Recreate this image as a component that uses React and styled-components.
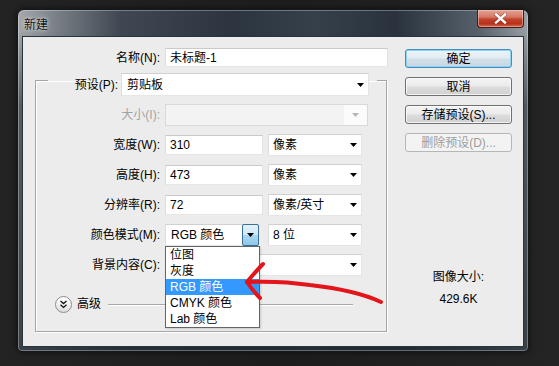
import React from "react";
import styled, { createGlobalStyle } from "styled-components";

const GlobalStyle = createGlobalStyle`
  html, body { margin: 0; padding: 0; }
  body {
    width: 559px;
    height: 366px;
    overflow: hidden;
    background: #1e1e1e;
    font-family: "Liberation Sans", "Noto Sans CJK SC", sans-serif;
    font-size: 12px;
    color: #000;
  }
  #root { width: 559px; height: 366px; }
`;

const Desktop = styled.div`
  position: relative;
  width: 559px;
  height: 366px;
  box-sizing: border-box;
  padding: 9px 0 0 17px;
  background: linear-gradient(90deg, #232323 0%, #1d1d1d 50%, #242424 100%);
`;

const Window = styled.div`
  width: 512px;
  height: 343px;
  box-sizing: border-box;
  display: flex;
  flex-direction: column;
  padding: 0 5px 5px;
  border: 1px solid #14181c;
  border-radius: 7px 7px 5px 5px;
  background:
    linear-gradient(180deg, rgba(0,0,0,0) 6%, rgba(24,30,36,0.55) 28%, rgba(32,40,48,0.8) 100%),
    linear-gradient(90deg, #a5a9ad 0%, #767d84 8%, #3f4852 20%, #2c353f 42%, #36404a 58%, #2a333d 74%, #56606a 90%, #98a0a7 100%);
  box-shadow: inset 0 0 0 1px rgba(255,255,255,0.3), 0 0 6px rgba(0,0,0,0.6);
`;

const TitleBar = styled.div`
  flex: none;
  height: 27px;
  margin: 0 -5px;
  padding: 0 4px 0 6px;
  display: flex;
  align-items: flex-start;
  justify-content: space-between;
`;

const Title = styled.span`
  margin-top: 6px;
  line-height: 15px;
  color: #101010;
  font-family: "Noto Sans CJK SC", sans-serif;
  text-shadow: 0 0 5px rgba(255,255,255,0.7), 0 0 2px rgba(255,255,255,0.6);
`;

const CloseButton = styled.div`
  width: 47px;
  height: 18px;
  box-sizing: border-box;
  display: flex;
  align-items: center;
  justify-content: center;
  border: 1px solid #4d1810;
  border-top: none;
  border-radius: 0 0 4px 4px;
  background: linear-gradient(180deg, #e3a294 0%, #d67a66 40%, #c2412b 55%, #b8311c 80%, #cf6a4f 100%);
  box-shadow: inset 0 0 0 1px rgba(255,220,210,0.45);
`;

const Client = styled.div`
  flex: 1;
  display: flex;
  background: #ececec;
  box-shadow: 0 0 0 1px #2b333b;
`;

const FormColumn = styled.div`
  position: relative;
  width: 370px;
  flex: none;
  padding-top: 11px;
  display: flex;
  flex-direction: column;
`;

const Row = styled.div`
  display: flex;
  align-items: center;
  gap: 5px;
  height: ${(p) => p.$h || 22}px;
  line-height: 16px;
`;

const Label = styled.span`
  width: ${(p) => p.$w}px;
  flex: none;
  text-align: right;
  white-space: nowrap;
  color: ${(p) => (p.$disabled ? "#a3a3a3" : "#000")};
`;

const TextBox = styled.div`
  width: ${(p) => p.$w}px;
  height: ${(p) => p.$h || 20}px;
  box-sizing: border-box;
  flex: none;
  display: flex;
  align-items: center;
  padding-left: 4px;
  background: #fff;
  border: 1px solid;
  border-color: #c9c9c9 #e2e2e2 #e6e6e6 #dddddd;
  white-space: nowrap;
`;

const SelectBox = styled.div`
  position: relative;
  width: ${(p) => p.$w}px;
  height: ${(p) => p.$h || 22}px;
  box-sizing: border-box;
  flex: none;
  margin-left: ${(p) => p.$ml || 0}px;
  display: flex;
  align-items: center;
  padding-left: ${(p) => p.$pl || 4}px;
  background: ${(p) => (p.$disabled ? "#f3f3f3" : "#fff")};
  border: 1px solid;
  border-color: ${(p) =>
    p.$disabled ? "#d9d9d9" : "#d0d0d0 #e4e4e4 #e6e6e6 #dedede"};
  white-space: nowrap;
`;

const SelectText = styled.span`
  flex: 1;
  overflow: hidden;
`;

const ArrowArea = styled.span`
  width: ${(p) => p.$w || 15}px;
  height: 100%;
  flex: none;
  display: flex;
  align-items: center;
  justify-content: center;
  box-sizing: border-box;
  background: ${(p) => (p.$plain ? "#fbfbfb" : "transparent")};
`;

const ArrowButton = styled.span`
  width: 17px;
  height: calc(100% + 2px);
  margin: -1px -1px -1px 0;
  flex: none;
  box-sizing: border-box;
  display: flex;
  align-items: center;
  justify-content: center;
  border: 1px solid #3c6f98;
  border-radius: 2px;
  background: linear-gradient(180deg, #e4f3fb 0%, #cde9f7 48%, #a9d7f1 52%, #8fc8ea 100%);
`;

const DropList = styled.div`
  position: absolute;
  left: -1px;
  top: calc(100% + 1px);
  width: 95px;
  box-sizing: border-box;
  border: 1px solid #646464;
  background: #fff;
  z-index: 5;
  box-shadow: 1px 1px 2px rgba(0,0,0,0.15);
`;

const DropItem = styled.div`
  height: 16px;
  line-height: 16px;
  padding-left: 4px;
  white-space: nowrap;
  background: ${(p) => (p.$active ? "#3399ff" : "transparent")};
  color: ${(p) => (p.$active ? "#fff" : "#000")};
`;

const GroupBox = styled.fieldset`
  margin: -3px 0 0 12px;
  width: 352px;
  box-sizing: border-box;
  padding: 8px 0 18px 0;
  border: 1px solid #a5a5a5;
  box-shadow: inset 1px 1px 0 #fff, 1px 1px 0 #fff;
  display: flex;
  flex-direction: column;
  gap: 8px;
  min-width: 0;
`;

const Legend = styled.legend`
  margin-left: 12px;
  padding: 9px 8px 0 0;
  display: flex;
  align-items: center;
  gap: 3px;
  line-height: 16px;
`;

const AdvancedRow = styled.div`
  display: flex;
  align-items: center;
  height: 18px;
  margin-top: 11px;
  padding-left: 19px;
  gap: 5px;
  line-height: 16px;
`;

const RoundButton = styled.span`
  width: 17px;
  height: 17px;
  box-sizing: border-box;
  flex: none;
  border-radius: 50%;
  border: 1px solid #8c8c8c;
  background: linear-gradient(180deg, #ffffff 0%, #f1f1f1 50%, #dcdcdc 100%);
  display: flex;
  align-items: center;
  justify-content: center;
`;

const Separator = styled.span`
  width: 245px;
  height: 1px;
  margin-left: 2px;
  background: #a8a8a8;
  box-shadow: 0 1px 0 #fff;
`;

const SideColumn = styled.div`
  width: 107px;
  flex: none;
  margin-left: 12px;
  padding-top: 12px;
  display: flex;
  flex-direction: column;
  align-items: center;
  gap: 9px;
`;

const Button = styled.div`
  width: 107px;
  height: 19px;
  box-sizing: border-box;
  display: flex;
  align-items: center;
  justify-content: center;
  border-radius: 3px;
  line-height: 16px;
  border: 1px solid ${(p) => (p.$primary ? "#3d8fc4" : p.$disabled ? "#b3b7ba" : "#707070")};
  color: ${(p) => (p.$disabled ? "#9d9d9d" : "#000")};
  background: ${(p) =>
    p.$disabled
      ? "#f3f3f3"
      : p.$primary
      ? "linear-gradient(180deg, #eef5f9 0%, #e1ebf1 48%, #d2dfe8 52%, #c7d7e2 100%)"
      : "linear-gradient(180deg, #f4f4f4 0%, #ebebeb 48%, #dddddd 52%, #d0d0d0 100%)"};
  box-shadow: ${(p) =>
    p.$primary
      ? "inset 0 0 0 1px #8fd3f2"
      : p.$disabled
      ? "none"
      : "inset 0 0 0 1px rgba(255,255,255,0.75)"};
`;

const SizeInfo = styled.div`
  margin-top: ${(p) => p.$mt}px;
  line-height: 16px;
  text-align: center;
  white-space: nowrap;
`;

const Overlay = styled.svg`
  position: absolute;
  left: 0;
  top: 0;
  width: 559px;
  height: 366px;
  pointer-events: none;
  z-index: 10;
`;

const Triangle = ({ color = "#000" }) => (
  <svg width="7" height="4" viewBox="0 0 7 4">
    <polygon points="0,0 7,0 3.5,4" fill={color} />
  </svg>
);

const Select = ({ w, h, ml, pl, text, disabled, arrowW }) => (
  <SelectBox $w={w} $h={h} $ml={ml} $pl={pl} $disabled={disabled}>
    <SelectText>{text}</SelectText>
    <ArrowArea $w={arrowW} $plain={disabled}>
      <Triangle color={disabled ? "#b5b5b5" : "#000"} />
    </ArrowArea>
  </SelectBox>
);

const modes = ["位图", "灰度", "RGB 颜色", "CMYK 颜色", "Lab 颜色"];

export default function App() {
  return (
    <>
      <GlobalStyle />
      <Desktop>
        <Window>
          <TitleBar>
            <Title>新建</Title>
            <CloseButton>
              <svg width="13" height="11" viewBox="0 0 13 11">
                <path
                  d="M2 1.5 L11 9.5 M11 1.5 L2 9.5"
                  stroke="#4a1209"
                  strokeWidth="3.6"
                  strokeLinecap="square"
                  opacity="0.45"
                />
                <path
                  d="M2 1.5 L11 9.5 M11 1.5 L2 9.5"
                  stroke="#fff"
                  strokeWidth="2.4"
                  strokeLinecap="square"
                />
              </svg>
            </CloseButton>
          </TitleBar>
          <Client>
            <FormColumn>
              <Row $h={19}>
                <Label $w={137}>名称(N):</Label>
                <TextBox $w={223} $h={19}>未标题-1</TextBox>
              </Row>
              <GroupBox>
                <Legend>
                  <Label $w={70}>预设(P):</Label>
                  <Select w={248} h={23} pl={5} text="剪贴板" />
                </Legend>
                <Row>
                  <Label $w={124} $disabled>大小(I):</Label>
                  <Select w={203} text="" disabled arrowW={23} />
                </Row>
                <Row>
                  <Label $w={124}>宽度(W):</Label>
                  <TextBox $w={98}>310</TextBox>
                  <Select w={94} text="像素" />
                </Row>
                <Row>
                  <Label $w={124}>高度(H):</Label>
                  <TextBox $w={98}>473</TextBox>
                  <Select w={94} text="像素" />
                </Row>
                <Row>
                  <Label $w={124}>分辨率(R):</Label>
                  <TextBox $w={98}>72</TextBox>
                  <Select w={94} text="像素/英寸" />
                </Row>
                <Row>
                  <Label $w={124}>颜色模式(M):</Label>
                  <SelectBox $w={94} $pl={5}>
                    <SelectText>RGB 颜色</SelectText>
                    <ArrowButton>
                      <Triangle />
                    </ArrowButton>
                    <DropList>
                      {modes.map((m) => (
                        <DropItem key={m} $active={m === "RGB 颜色"}>
                          {m}
                        </DropItem>
                      ))}
                    </DropList>
                  </SelectBox>
                  <Select w={94} ml={4} text="8 位" />
                </Row>
                <Row>
                  <Label $w={124}>背景内容(C):</Label>
                  <Select w={197} text="" />
                </Row>
                <AdvancedRow>
                  <RoundButton>
                    <svg width="9" height="9" viewBox="0 0 9 9">
                      <path
                        d="M1.5 1 L4.5 3.6 L7.5 1 M1.5 4.8 L4.5 7.4 L7.5 4.8"
                        fill="none"
                        stroke="#111"
                        strokeWidth="1.3"
                      />
                    </svg>
                  </RoundButton>
                  <span>高级</span>
                  <Separator />
                </AdvancedRow>
              </GroupBox>
            </FormColumn>
            <SideColumn>
              <Button $primary>确定</Button>
              <Button>取消</Button>
              <Button>存储预设(S)...</Button>
              <Button $disabled>删除预设(D)...</Button>
              <SizeInfo $mt={108}>图像大小:</SizeInfo>
              <SizeInfo $mt={-3}>429.6K</SizeInfo>
            </SideColumn>
          </Client>
        </Window>
        <Overlay viewBox="0 0 559 366">
          <g
            fill="none"
            stroke="#e4141b"
            strokeWidth="4"
            strokeLinecap="round"
            strokeLinejoin="round"
          >
            <path d="M381 302 C362 293, 336 288, 310 285 C290 282, 270 281, 247 282" />
            <path d="M247 282 C252 276, 257 270, 263 264" />
            <path d="M247 282 C251 288, 255 293, 260 298" />
          </g>
        </Overlay>
      </Desktop>
    </>
  );
}
